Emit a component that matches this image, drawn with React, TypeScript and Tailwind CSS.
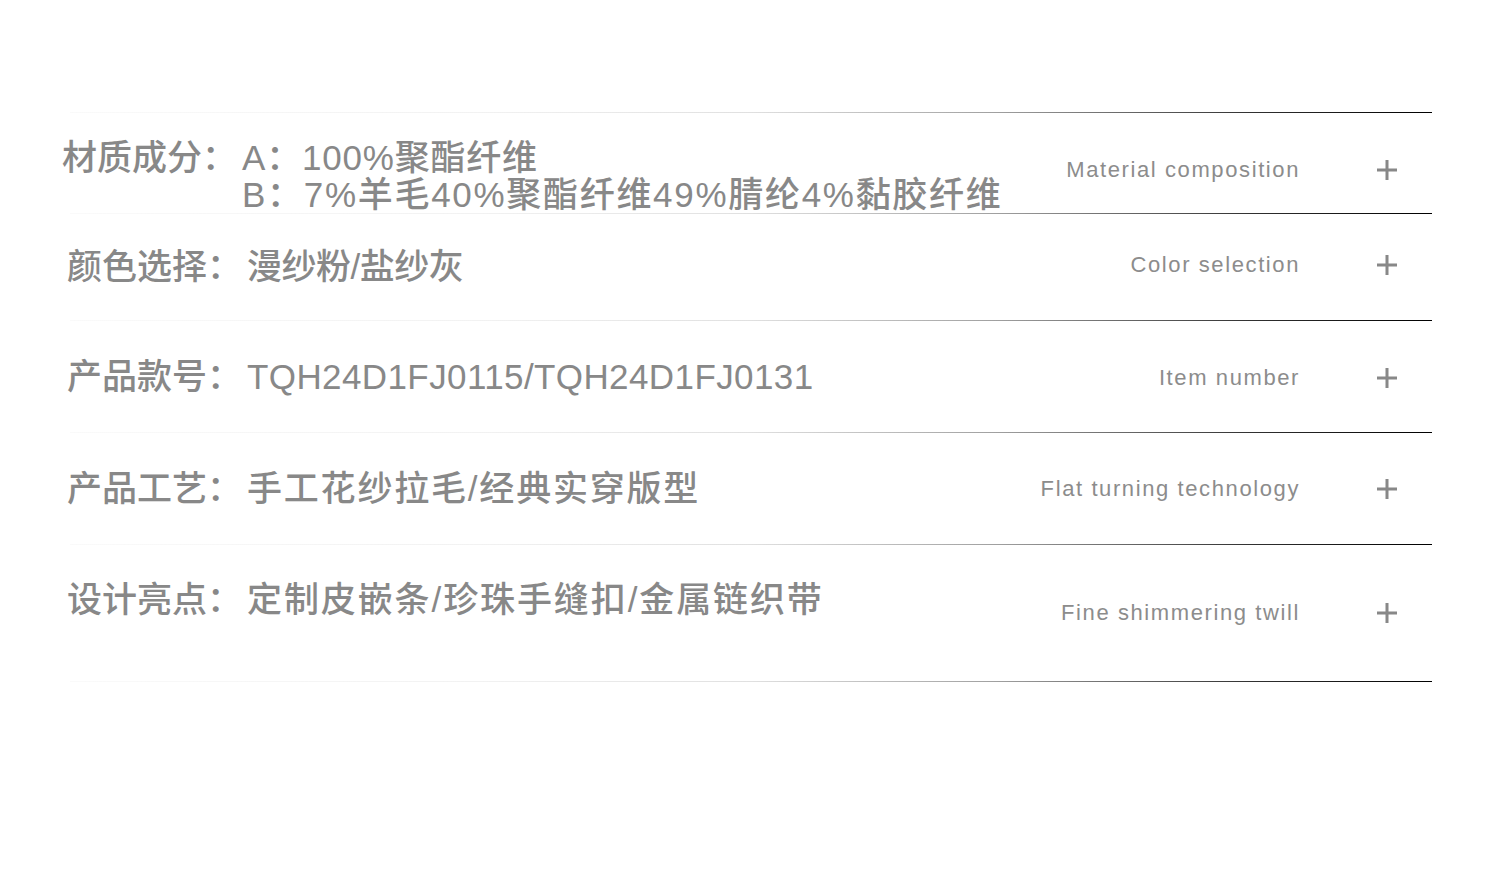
import React from "react";

type Line = { text: string; track: string };

type Row = {
  label: string;
  lines: Line[];
  en: string;
  height: string;
  textClass: string;
  rightClass: string;
};

const rows: Row[] = [
  {
    label: "材质成分：",
    lines: [
      { text: "A：100%聚酯纤维", track: "tracking-[0.8px]" },
      { text: "B：7%羊毛40%聚酯纤维49%腈纶4%黏胶纤维", track: "tracking-[1.7px]" },
    ],
    en: "Material composition",
    height: "h-[100px]",
    textClass: "self-start pt-[26px] -ml-[8px]",
    rightClass: "mt-[14px]",
  },
  {
    label: "颜色选择：",
    lines: [{ text: "漫纱粉/盐纱灰", track: "tracking-[-0.5px]" }],
    en: "Color selection",
    height: "h-[106px]",
    textClass: "-ml-[3px] -mt-[2px]",
    rightClass: "-mt-[4px]",
  },
  {
    label: "产品款号：",
    lines: [{ text: "TQH24D1FJ0115/TQH24D1FJ0131", track: "tracking-[0.4px]" }],
    en: "Item number",
    height: "h-[111px]",
    textClass: "-ml-[3px]",
    rightClass: "mt-[2px]",
  },
  {
    label: "产品工艺：",
    lines: [{ text: "手工花纱拉毛/经典实穿版型", track: "tracking-[1.8px]" }],
    en: "Flat turning technology",
    height: "h-[111px]",
    textClass: "-ml-[3px] -mt-[1px]",
    rightClass: "mt-[1px]",
  },
  {
    label: "设计亮点：",
    lines: [{ text: "定制皮嵌条/珍珠手缝扣/金属链织带", track: "tracking-[1.9px]" }],
    en: "Fine shimmering twill",
    height: "h-[136px]",
    textClass: "self-start pt-[36px] -ml-[3px]",
    rightClass: "",
  },
];

const Divider = () => (
  <div className="h-px w-full bg-[linear-gradient(to_right,#fafafa_0%,#f2f2f2_30%,#e0e0e0_50%,#a0a0a0_68%,#303030_87%,#000000_100%)]" />
);

const Plus = () => (
  <svg width="20" height="20" viewBox="0 0 20 20" className="block">
    <rect x="0" y="8.5" width="20" height="3" fill="#888888" />
    <rect x="8.5" y="0" width="3" height="20" fill="#888888" />
  </svg>
);

const SpecRow: React.FC<{ row: Row }> = ({ row }) => (
  <div className={`flex items-center ${row.height}`}>
    <div
      className={`flex text-[35px] leading-[37px] font-medium text-[#888888] whitespace-nowrap ${row.textClass}`}
      style={{ fontFamily: '"Liberation Sans", "Noto Sans CJK SC", sans-serif' }}
    >
      <span>{row.label}</span>
      <div className="flex flex-col ml-[5px]">
        {row.lines.map((l) => (
          <span key={l.text} className={l.track}>
            {l.text}
          </span>
        ))}
      </div>
    </div>
    <div className={`ml-auto flex items-center ${row.rightClass}`}>
      <span
        className="text-[22px] leading-[30px] tracking-[1.6px] text-[#8c8c8c]"
        style={{ fontFamily: '"Liberation Sans", Arial, sans-serif' }}
      >
        {row.en}
      </span>
      <div className="ml-[77px] mr-[35px]">
        <Plus />
      </div>
    </div>
  </div>
);

export default function App() {
  return (
    <div className="w-[1500px] h-[883px] bg-white pt-[112px] pl-[70px] pr-[68px]">
      {rows.map((r) => (
        <div key={r.label}>
          <Divider />
          <SpecRow row={r} />
        </div>
      ))}
      <Divider />
    </div>
  );
}
